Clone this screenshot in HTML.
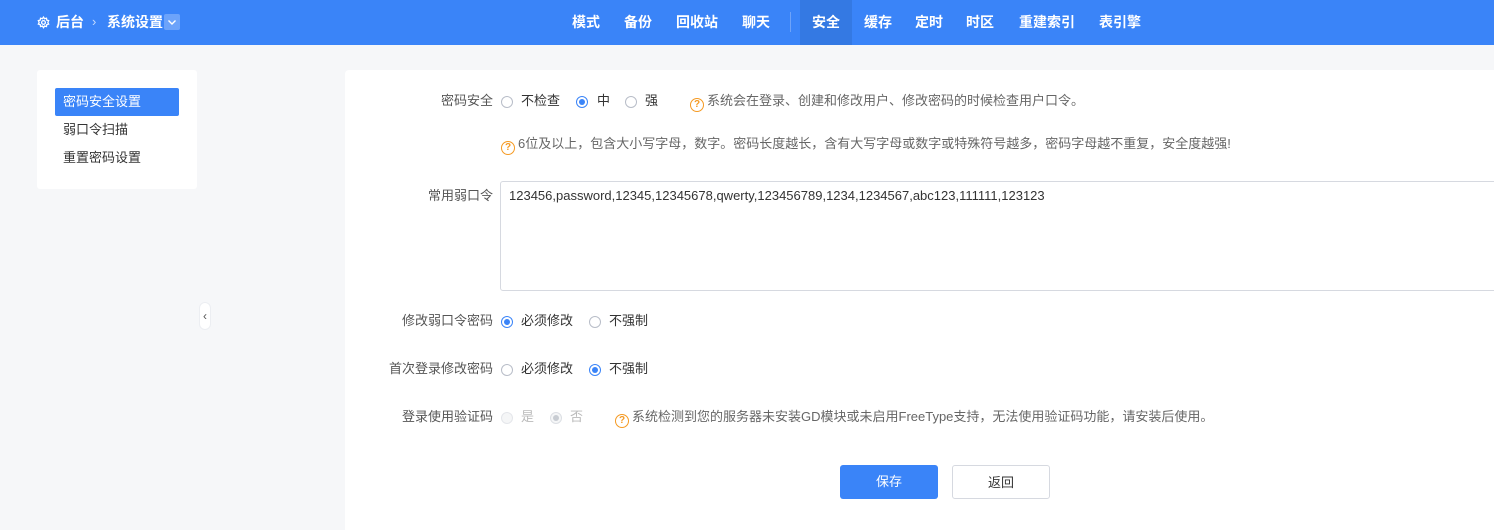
<!DOCTYPE html><html><head><meta charset="utf-8"><style>
*{margin:0;padding:0;box-sizing:border-box}
body{width:1494px;height:519px;background:#f6f7f9;font-family:"Liberation Sans","Noto Sans CJK SC",sans-serif;font-size:13px;color:#333;position:relative;overflow:hidden}
.hd{position:absolute;left:0;top:0;width:1494px;height:45px;background:#3a84f8;color:#fff;font-weight:bold;font-size:14px}
.hd span{position:absolute;top:13px;line-height:18px}
.act{position:absolute;left:800px;top:0;width:52px;height:45px;background:#3479e3}
.sep{position:absolute;left:790px;top:12px;width:1px;height:20px;background:#6ea3f9}
.lp{position:absolute;left:37px;top:70px;width:160px;height:119px;background:#fff;border-radius:3px}
.lp div{position:absolute;left:18px;width:124px;height:28px;line-height:28px;padding-left:8px;font-size:13px;color:#333}
.mp{position:absolute;left:345px;top:70px;width:1149px;height:460px;background:#fff;border-radius:4px 0 0 0}
.a{position:absolute;white-space:nowrap;line-height:18px}
.lb{text-align:right;width:200px;color:#555}
.r{position:absolute;width:12px;height:12px;border:1px solid #b8bdc8;border-radius:50%;background:#fff}
.r.on{border-color:#3a84f8}
.r.on:after{content:"";position:absolute;left:2px;top:2px;width:6px;height:6px;border-radius:50%;background:#3a84f8}
.r.dis{border-color:#e4e6ea;background:#f5f6f7}
.r.dison{border-color:#dcdfe4;background:#f5f6f7}
.r.dison:after{content:"";position:absolute;left:2px;top:2px;width:6px;height:6px;border-radius:50%;background:#c8ccd2}
.q{display:inline-flex;align-items:center;justify-content:center;width:14px;height:14px;border:1.5px solid #f59a23;border-radius:50%;color:#f59a23;font-size:10px;font-weight:bold;font-family:"Liberation Sans",sans-serif;line-height:1;vertical-align:-2px;margin-right:3px}
.tip{color:#666}
.ta{position:absolute;left:500px;top:181px;width:1000px;height:110px;border:1px solid #d6d9e0;border-radius:3px;padding:6px 8px;color:#333}
.btn{position:absolute;top:465px;width:98px;height:34px;border-radius:3px;text-align:center;line-height:34px}
</style></head><body>
<div class="hd">
<svg style="position:absolute;left:37px;top:16px" width="13" height="13" viewBox="0 0 24 24" fill="none" stroke="#fff" stroke-width="2.4"><circle cx="12" cy="12" r="3.5"/><path d="M12 2l2 3 3.5-1 .5 3.5 3.5 1-1.5 3.5 1.5 3-3.5 1-.5 3.5-3.5-1-2 3-2-3-3.5 1-.5-3.5-3.5-1 1.5-3-1.5-3.5 3.5-1 .5-3.5 3.5 1z"/></svg>
<span style="left:56px">后台</span><span style="left:92px;font-weight:normal;opacity:.7;font-size:13px">›</span><span style="left:107px">系统设置</span>
<div style="position:absolute;left:164px;top:14px;width:16px;height:16px;background:#6ca3fa;border-radius:2px"><svg width="16" height="16" viewBox="0 0 16 16"><path d="M4.5 6.5L8 10l3.5-3.5" fill="none" stroke="#fff" stroke-width="1.4"/></svg></div>
<div class="act"></div><div class="sep"></div>
<span style="left:572px">模式</span><span style="left:624px">备份</span><span style="left:676px">回收站</span><span style="left:742px">聊天</span>
<span style="left:812px">安全</span><span style="left:864px">缓存</span><span style="left:915px">定时</span><span style="left:966px">时区</span><span style="left:1019px">重建索引</span><span style="left:1099px">表引擎</span>
</div>
<div class="lp">
<div style="top:18px;background:#3a84f8;color:#fff;border-radius:2px">密码安全设置</div>
<div style="top:46px">弱口令扫描</div>
<div style="top:74px">重置密码设置</div>
</div>
<div style="position:absolute;left:199px;top:302px;width:12px;height:28px;background:#fff;border:1px solid #eceef2;border-radius:6px;font-size:12px;line-height:26px;text-align:center;color:#555">‹</div>
<div class="mp"></div>
<div class="a lb" style="left:293px;top:92px">密码安全</div>
<div class="r" style="left:501px;top:96px"></div><div class="a" style="left:521px;top:92px">不检查</div>
<div class="r on" style="left:576px;top:96px"></div><div class="a" style="left:597px;top:92px">中</div>
<div class="r" style="left:625px;top:96px"></div><div class="a" style="left:645px;top:92px">强</div>
<div class="a tip" style="left:690px;top:92px"><span class="q">?</span>系统会在登录、创建和修改用户、修改密码的时候检查用户口令。</div>
<div class="a tip" style="left:501px;top:135px"><span class="q">?</span>6位及以上，包含大小写字母，数字。密码长度越长，含有大写字母或数字或特殊符号越多，密码字母越不重复，安全度越强!</div>
<div class="a lb" style="left:293px;top:187px">常用弱口令</div>
<div class="ta">123456,password,12345,12345678,qwerty,123456789,1234,1234567,abc123,111111,123123</div>
<div class="a lb" style="left:293px;top:312px">修改弱口令密码</div>
<div class="r on" style="left:501px;top:316px"></div><div class="a" style="left:521px;top:312px">必须修改</div>
<div class="r" style="left:589px;top:316px"></div><div class="a" style="left:609px;top:312px">不强制</div>
<div class="a lb" style="left:293px;top:360px">首次登录修改密码</div>
<div class="r" style="left:501px;top:364px"></div><div class="a" style="left:521px;top:360px">必须修改</div>
<div class="r on" style="left:589px;top:364px"></div><div class="a" style="left:609px;top:360px">不强制</div>
<div class="a lb" style="left:293px;top:408px">登录使用验证码</div>
<div class="r dis" style="left:501px;top:412px"></div><div class="a" style="left:521px;top:408px;color:#bbb">是</div>
<div class="r dison" style="left:550px;top:412px"></div><div class="a" style="left:570px;top:408px;color:#bbb">否</div>
<div class="a tip" style="left:615px;top:408px"><span class="q">?</span>系统检测到您的服务器未安装GD模块或未启用FreeType支持，无法使用验证码功能，请安装后使用。</div>
<div class="btn" style="left:840px;background:#3a84f8;color:#fff">保存</div>
<div class="btn" style="left:952px;border:1px solid #d6d9e0;color:#333">返回</div>
</body></html>
